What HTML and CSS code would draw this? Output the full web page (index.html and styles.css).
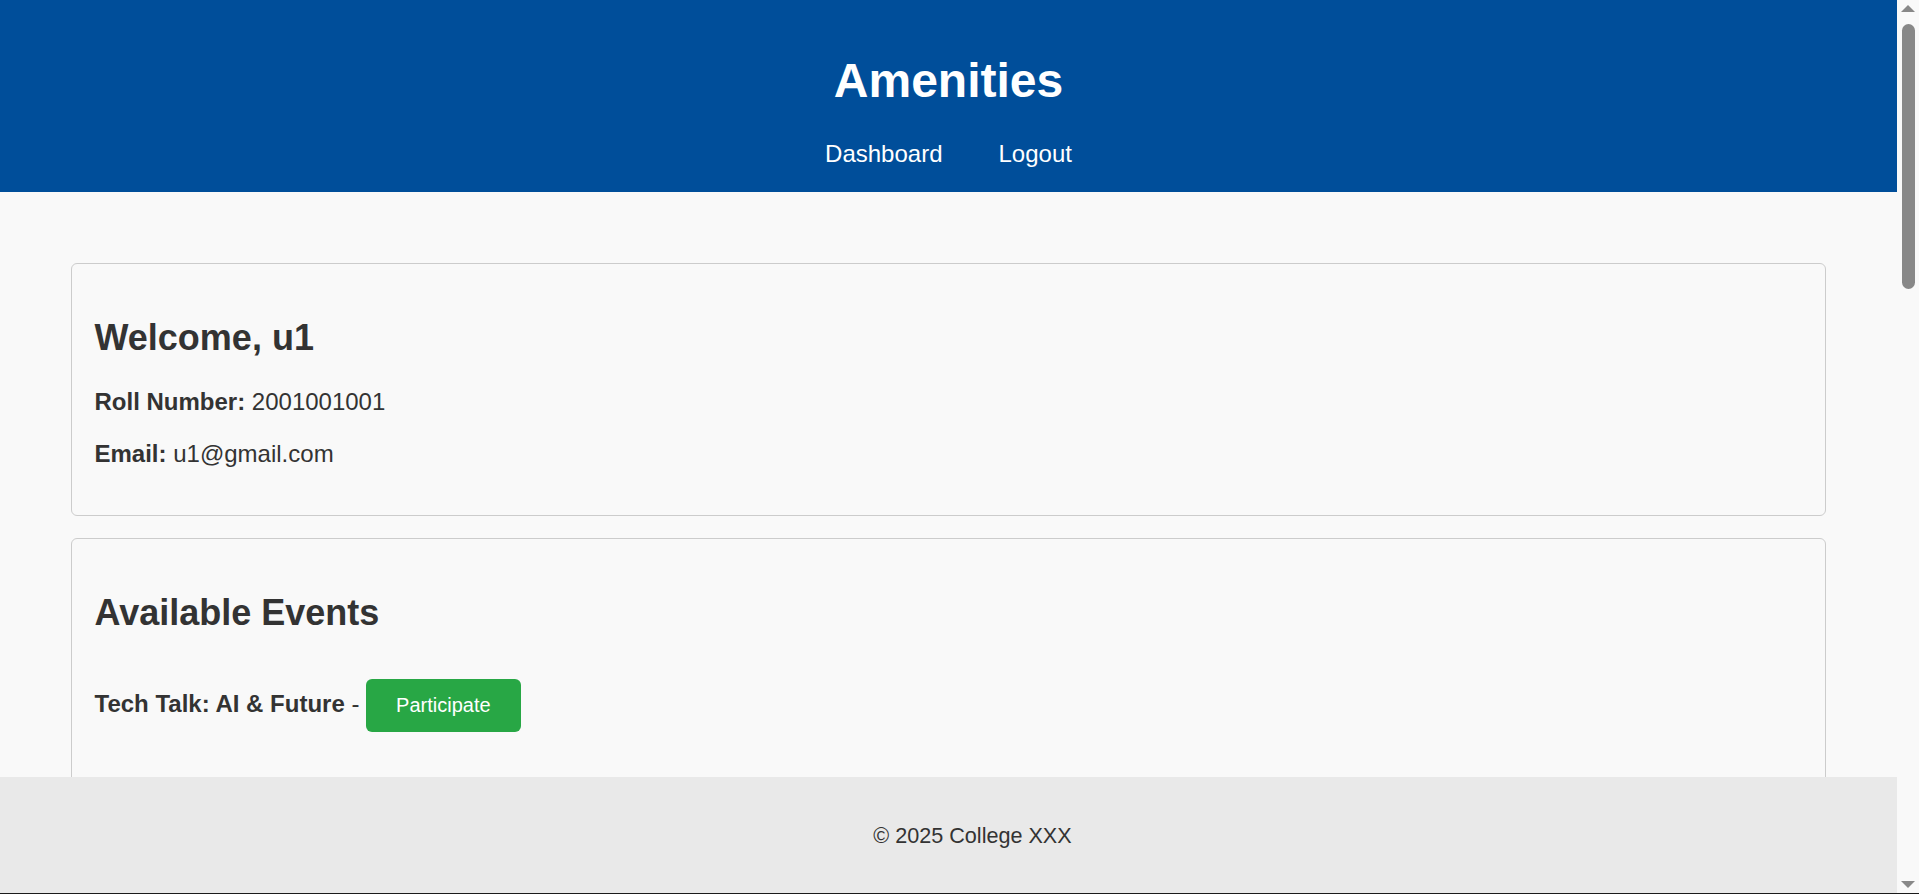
FILE: index.html
```html
<!DOCTYPE html>
<html lang="en">
<head>
<meta charset="utf-8">
<title>Amenities</title>
<link rel="stylesheet" href="styles.css">
</head>
<body>
<div class="page">
  <header class="site-header">
    <h1 class="site-title">Amenities</h1>
    <nav class="site-nav">
      <a class="nav-link" href="#">Dashboard</a>
      <a class="nav-link" href="#">Logout</a>
    </nav>
  </header>

  <main class="main">
    <section class="card">
      <h2 class="card-title">Welcome, u1</h2>
      <p class="info"><strong>Roll Number:</strong> 2001001001</p>
      <p class="info"><strong>Email:</strong> u1@gmail.com</p>
    </section>

    <section class="card">
      <h2 class="card-title">Available Events</h2>
      <div class="event"><strong>Tech Talk: AI &amp; Future</strong> - <button class="btn">Participate</button></div>
      <div class="event"><strong>Cultural Fest 2025</strong> - <button class="btn">Participate</button></div>
    </section>
  </main>

  <footer class="site-footer">
    <p class="footer-text">&copy; 2025 College XXX</p>
  </footer>
</div>

<div class="scrollbar" aria-hidden="true">
  <svg class="sb-arrow sb-arrow-up" width="14" height="7" viewBox="0 0 14 7"><polygon points="7,0 14,7 0,7" fill="#888"/></svg>
  <div class="sb-thumb"></div>
  <div class="sb-space"></div>
  <svg class="sb-arrow sb-arrow-down" width="14" height="7" viewBox="0 0 14 7"><polygon points="0,0 14,0 7,7" fill="#888"/></svg>
</div>
</body>
</html>
```

FILE: styles.css
```css
html {
  background: #f9f9f9;
}

body {
  margin: 0;
  height: 100vh;
  box-sizing: border-box;
  border-bottom: 1px solid #1a1a1a;
  display: flex;
  overflow: hidden;
  font-family: "Liberation Sans", Arial, sans-serif;
  font-size: 24px;
  color: #333;
  background: #f9f9f9;
}

.page {
  flex: 1;
  min-width: 0;
  display: flex;
  flex-direction: column;
  overflow: hidden;
}

/* header */
.site-header {
  flex: none;
  background: #004e9a;
  color: #fff;
  text-align: center;
  padding: 20.5px 0 24.7px;
}

.site-title {
  font-size: 48px;
  font-weight: bold;
  margin: 32px 0;
}

.site-nav {
  display: flex;
  justify-content: center;
  gap: 56px;
}

.nav-link {
  color: #fff;
  text-decoration: none;
  font-size: 24px;
}

/* main */
.main {
  flex: 1;
  min-height: 0;
  overflow: hidden;
  padding: 71px 71px 0;
}

.card {
  background: #f9f9f9;
  border: 1px solid #ccc;
  border-radius: 6px;
  padding: 22.5px;
  margin-bottom: 22.5px;
}

.card-title {
  font-size: 36px;
  margin: 29.9px 0;
}

.info {
  margin: 24px 0;
}

.event {
  padding: 15px 0;
  margin-bottom: 15px;
}

.btn {
  font-family: "Liberation Sans", Arial, sans-serif;
  font-size: 20px;
  color: #fff;
  background: #28a745;
  border: none;
  border-radius: 6px;
  padding: 15px 30px;
  cursor: pointer;
}

/* footer: full width plus its own padding, as in the original */
.site-footer {
  flex: none;
  height: 116px;
  box-sizing: border-box;
  margin-right: -48px;
  background: #e9e9e9;
  text-align: center;
  padding: 24px;
}

.footer-text {
  font-size: 21.6px;
  margin: 21.6px 0;
}

/* scrollbar column */
.scrollbar {
  flex: none;
  width: 22px;
  display: flex;
  flex-direction: column;
  align-items: center;
  background: #f9f9f9;
}

.sb-arrow {
  display: block;
  flex: none;
}

.sb-arrow-up {
  margin-top: 5px;
}

.sb-thumb {
  flex: none;
  width: 13px;
  height: 265px;
  margin-top: 12px;
  border-radius: 7px;
  background: #888;
}

.sb-space {
  flex: 1;
}

.sb-arrow-down {
  margin-bottom: 5px;
}
```
